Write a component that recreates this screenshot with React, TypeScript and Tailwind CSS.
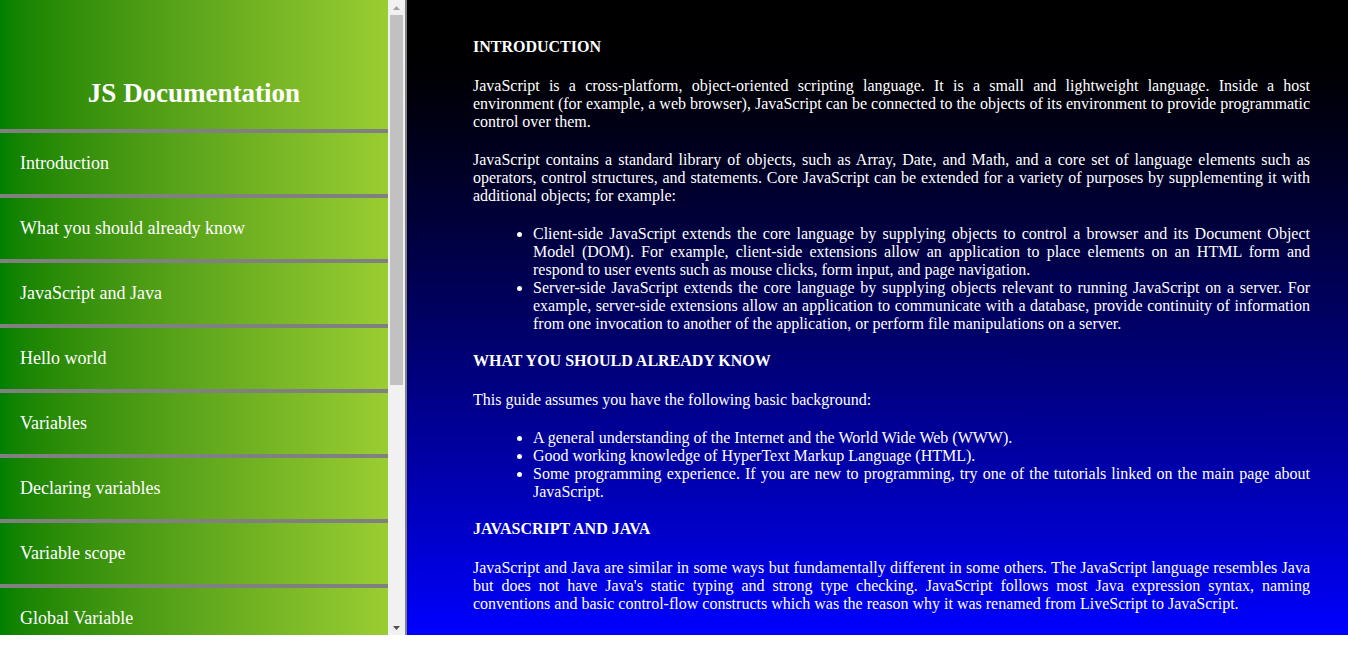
const navItems = [
  "Introduction",
  "What you should already know",
  "JavaScript and Java",
  "Hello world",
  "Variables",
  "Declaring variables",
  "Variable scope",
  "Global Variable",
  "Constants",
  "Data types",
  "if...else statement",
  "while statement",
  "Function declarations",
  "Reference",
];

// classic scrollbar drawn by hand, the headless page hides the native one
function ScrollBar() {
  return (
    <div className="flex h-full w-[17px] shrink-0 flex-col bg-[#f1f1f1]">
      <div className="flex h-[15px] items-center justify-center">
        <svg width="7" height="4" viewBox="0 0 7 4">
          <path d="M0 4 L3.5 0 L7 4 Z" fill="#a3a3a3" />
        </svg>
      </div>
      <div className="mx-[2px] h-[370px] bg-[#c1c1c1]" />
      <div className="flex-1" />
      <div className="flex h-[15px] items-center justify-center">
        <svg width="7" height="4" viewBox="0 0 7 4">
          <path d="M0 0 L7 0 L3.5 4 Z" fill="#505050" />
        </svg>
      </div>
    </div>
  );
}

export default function App() {
  return (
    <div className="flex h-[635px] w-full font-['Liberation_Serif',serif] text-white">
      {/* Sidebar */}
      <div className="flex h-full shrink-0 border-r-2 border-[#808080]">
        <nav className="h-full w-[388px] overflow-hidden bg-gradient-to-r from-[#008000] to-[#9acd32]">
          <header className="box-border h-[133px] border-b-4 border-[#808080] pt-[78px]">
            <h1 className="text-center text-[27px] font-bold leading-[30px]">JS Documentation</h1>
          </header>
          <ul>
            {navItems.map((item) => (
              <li key={item} className="box-content flex h-[61px] items-center border-b-4 border-[#808080] pl-5 text-[18px]">
                {item}
              </li>
            ))}
          </ul>
        </nav>
        <ScrollBar />
      </div>

      {/* Main content */}
      <main className="h-full flex-1 overflow-hidden bg-gradient-to-b from-black to-[#0000ff] pl-[66px] pr-[38px] pt-[38px] text-[16px] leading-[18px] text-justify">
        <section>
          <h2 className="mb-[21px] font-bold uppercase">Introduction</h2>
          <p className="mb-5">
            JavaScript is a cross-platform, object-oriented scripting language. It is a small and lightweight language. Inside a host environment (for example, a web browser), JavaScript can be connected to the objects of its environment to provide programmatic control over them.
          </p>
          <p className="mb-5">
            JavaScript contains a standard library of objects, such as Array, Date, and Math, and a core set of language elements such as operators, control structures, and statements. Core JavaScript can be extended for a variety of purposes by supplementing it with additional objects; for example:
          </p>
          <ul className="mb-[19px] list-disc pl-[60px]">
            <li>
              Client-side JavaScript extends the core language by supplying objects to control a browser and its Document Object Model (DOM). For example, client-side extensions allow an application to place elements on an HTML form and respond to user events such as mouse clicks, form input, and page navigation.
            </li>
            <li>
              Server-side JavaScript extends the core language by supplying objects relevant to running JavaScript on a server. For example, server-side extensions allow an application to communicate with a database, provide continuity of information from one invocation to another of the application, or perform file manipulations on a server.
            </li>
          </ul>
        </section>

        <section>
          <h2 className="mb-[21px] font-bold uppercase">What you should already know</h2>
          <p className="mb-5">This guide assumes you have the following basic background:</p>
          <ul className="mb-[19px] list-disc pl-[60px]">
            <li>A general understanding of the Internet and the World Wide Web (WWW).</li>
            <li>Good working knowledge of HyperText Markup Language (HTML).</li>
            <li>
              Some programming experience. If you are new to programming, try one of the tutorials linked on the main page about JavaScript.
            </li>
          </ul>
        </section>

        <section>
          <h2 className="mb-[21px] font-bold uppercase">JavaScript and Java</h2>
          <p className="mb-5">
            JavaScript and Java are similar in some ways but fundamentally different in some others. The JavaScript language resembles Java but does not have Java's static typing and strong type checking. JavaScript follows most Java expression syntax, naming conventions and basic control-flow constructs which was the reason why it was renamed from LiveScript to JavaScript.
          </p>
        </section>
      </main>
    </div>
  );
}
